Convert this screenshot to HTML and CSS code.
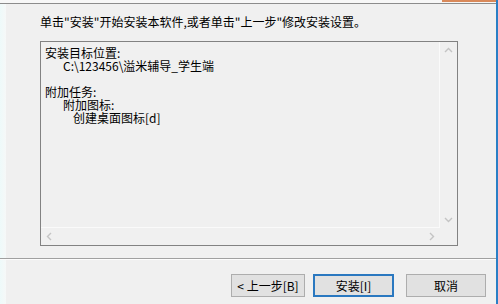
FILE: index.html
```html
<!DOCTYPE html>
<html>
<head>
<meta charset="utf-8">
<link rel="stylesheet" href="styles.css">
</head>
<body>
<div class="window">
  <div class="topedge"><div class="spacer"></div><div class="orange"></div></div>
  <div class="topline"></div>
  <div class="body">
    <div class="leftstrip"></div>
    <div class="main">
      <div class="page">
        <p class="intro">单击"安装"开始安装本软件,或者单击"上一步"修改安装设置。</p>
        <div class="memo">
          <div class="memo-text">
            <div class="ln">安装目标位置:</div>
            <div class="ln i1">C:\123456\溢米辅导_学生端</div>
            <div class="ln"></div>
            <div class="ln">附加任务:</div>
            <div class="ln i1">附加图标:</div>
            <div class="ln i2">创建桌面图标[d]</div>
          </div>
          <div class="vscroll">
            <svg class="arr" width="17" height="17" viewBox="0 0 17 17"><path d="M5 10 L8.5 6.5 L12 10" fill="none" stroke="#c4c4c4" stroke-width="1.4"/></svg>
            <svg class="arr" width="17" height="17" viewBox="0 0 17 17"><path d="M5 7 L8.5 10.5 L12 7" fill="none" stroke="#c4c4c4" stroke-width="1.4"/></svg>
          </div>
          <div class="hscroll">
            <svg class="arr" width="17" height="17" viewBox="0 0 17 17"><path d="M10 5 L6.5 8.5 L10 12" fill="none" stroke="#c4c4c4" stroke-width="1.4"/></svg>
            <svg class="arr" width="17" height="17" viewBox="0 0 17 17"><path d="M7 5 L10.5 8.5 L7 12" fill="none" stroke="#c4c4c4" stroke-width="1.4"/></svg>
          </div>
          <div class="corner"></div>
        </div>
      </div>
      <div class="sep"></div>
      <div class="buttons">
        <button class="btn back">&lt; 上一步[B]</button>
        <button class="btn default">安装[I]</button>
        <button class="btn cancel">取消</button>
      </div>
    </div>
  </div>
</div>
</body>
</html>
```
FILE: styles.css
```css
html, body {
  margin: 0;
  padding: 0;
  background: #f0f0f0;
}
body {
  width: 498px;
  height: 304px;
  overflow: hidden;
  font-family: "Noto Sans CJK SC", "Microsoft YaHei", sans-serif;
  font-size: 12px;
  color: #000;
}
.window {
  width: 496px;
  height: 304px;
  border-right: 2px solid #2a7fc6;
  display: flex;
  flex-direction: column;
}
.topedge {
  height: 3px;
  display: flex;
  background: #f7f7f7;
}
.spacer { flex: 1; }
.orange {
  width: 54px;
  height: 2px;
  background: #d9895a;
}
.topline {
  height: 1px;
  background: #8c8c8c;
}
.body {
  flex: 1;
  display: flex;
}
.leftstrip {
  width: 6px;
  background: linear-gradient(to right, #eefafa, #f6f8f8);
}
.main {
  flex: 1;
  display: flex;
  flex-direction: column;
}
.page {
  height: 254px;
  padding-left: 34px;
  box-sizing: border-box;
}
.intro {
  margin: 0;
  padding-top: 11px;
  height: 26px;
  line-height: 14px;
  box-sizing: border-box;
}
.memo {
  margin-top: 11px;
  width: 418px;
  height: 205px;
  box-sizing: border-box;
  border: 1px solid #828282;
  display: grid;
  grid-template-columns: 1fr 17px;
  grid-template-rows: 1fr 17px;
  background: #f0f0f0;
}
.memo-text {
  padding: 4px 4px;
  line-height: 13px;
  white-space: nowrap;
}
.ln { height: 13px; }
.i1 { padding-left: 18px; }
.i2 { padding-left: 28px; }
.vscroll {
  border-left: 1px solid #fafafa;
  display: flex;
  flex-direction: column;
  justify-content: space-between;
  margin-left: -1px;
}
.hscroll {
  border-top: 1px solid #fafafa;
  display: flex;
  justify-content: space-between;
  margin-top: -1px;
}
.arr { display: block; }
.corner { background: #f0f0f0; }
.sep {
  height: 1px;
  background: #a0a0a0;
  border-bottom: 1px solid #fcfcfc;
  margin-left: -6px;
}
.buttons {
  display: flex;
  justify-content: flex-end;
  padding-top: 14px;
  padding-right: 10px;
}
.btn {
  font-family: "Noto Sans CJK SC", "Microsoft YaHei", sans-serif;
  font-size: 12px;
  height: 23px;
  padding: 0;
  margin: 0;
  background: #e1e1e1;
  border: 1px solid #adadad;
  color: #000;
  line-height: 19px;
}
.back { width: 74px; }
.default {
  width: 81px;
  margin-left: 8px;
  border: 2px solid #2a78c0;
}
.cancel {
  width: 80px;
  margin-left: 12px;
}
```
